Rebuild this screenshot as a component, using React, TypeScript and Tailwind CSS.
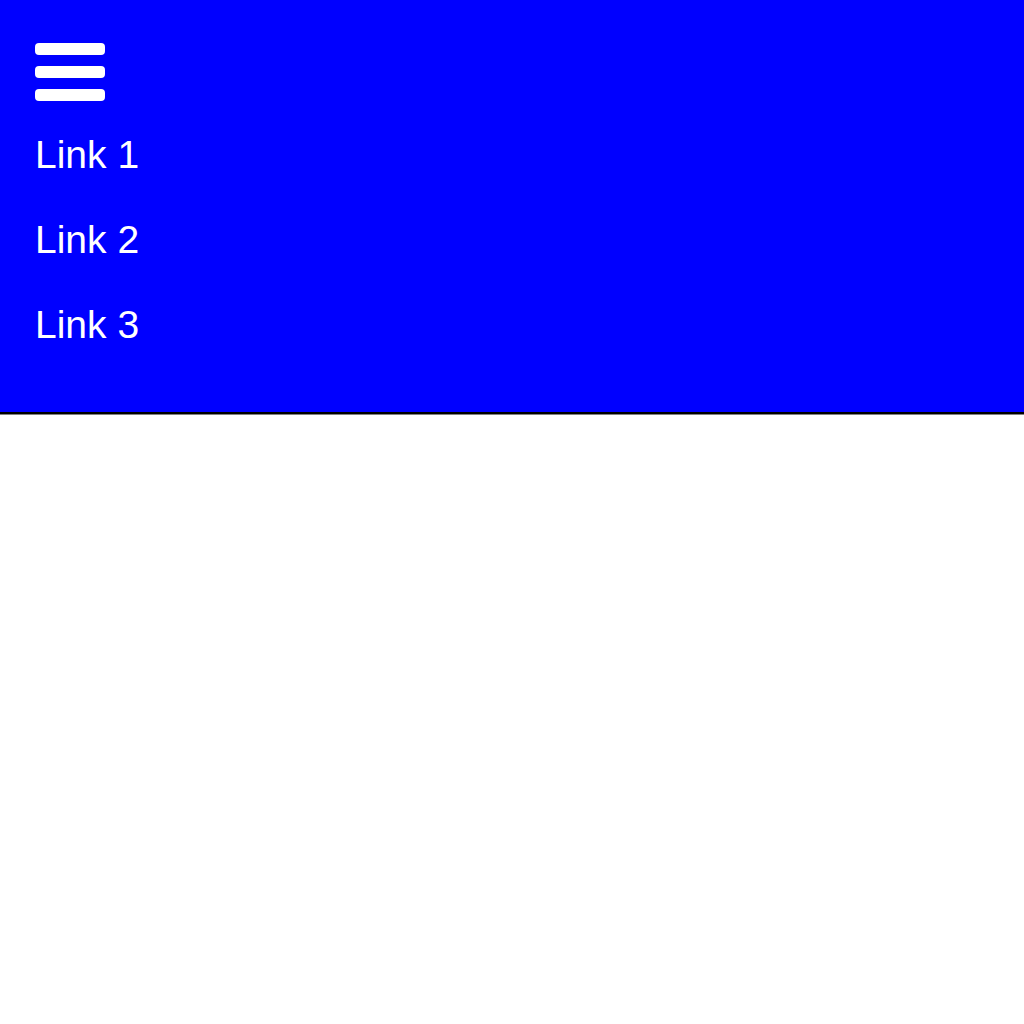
import React from "react";

export default function App() {
  return (
    <div className="w-[1024px] h-[1024px] bg-white" style={{ fontFamily: '"Liberation Sans", Arial, sans-serif' }}>
      <nav className="h-[414px] bg-[#0000ff] border-b-2 border-black pl-[35px] pt-[43px] flex flex-col">
        <button className="w-[70px] h-[58px] flex flex-col justify-between items-start" aria-label="menu">
          <span className="block w-[70px] h-[12px] rounded-[4px] bg-white" />
          <span className="block w-[70px] h-[12px] rounded-[4px] bg-white" />
          <span className="block w-[70px] h-[12px] rounded-[4px] bg-white" />
        </button>
        <ul className="mt-[32px] flex flex-col gap-[41px] text-white text-[39px] leading-[44px]">
          <li>Link 1</li>
          <li>Link 2</li>
          <li>Link 3</li>
        </ul>
      </nav>
      <div className="h-px bg-[#808080]" />
    </div>
  );
}
